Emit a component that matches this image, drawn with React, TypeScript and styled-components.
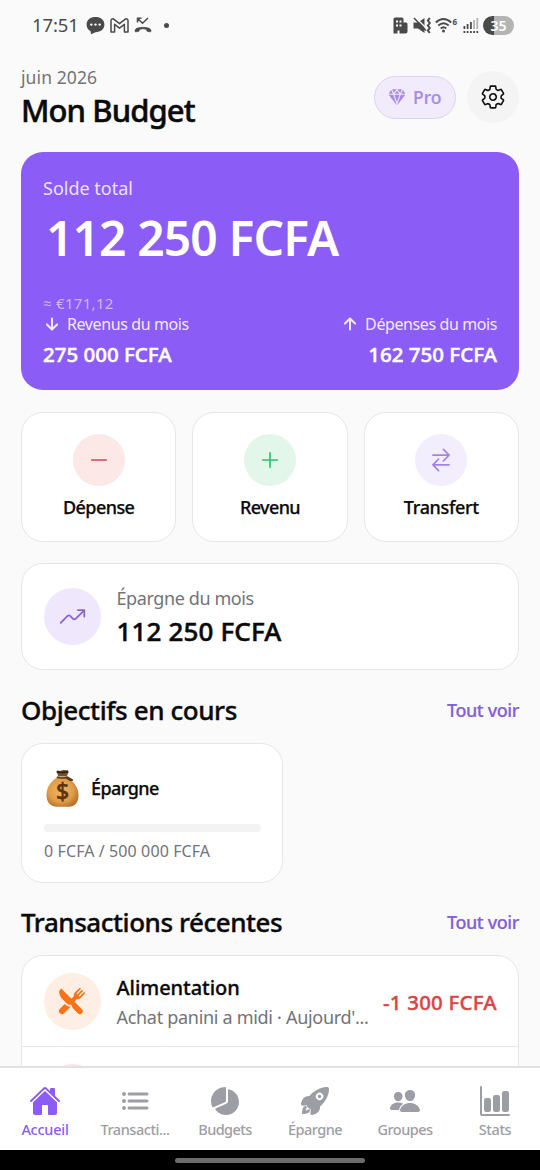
import React from 'react';
import styled, { createGlobalStyle } from 'styled-components';
import {
  IoAdd, IoArrowDown, IoArrowUp, IoBarChart, IoDiamond, IoHome, IoList, IoPeople,
  IoPieChart, IoRemove, IoRestaurant, IoRocket, IoSettingsOutline, IoSwapHorizontal, IoTrendingUp,
} from 'react-icons/io5';

const GlobalStyle = createGlobalStyle`
  * { box-sizing: border-box; }
  body { margin: 0; background: #fafafa; }
  svg { display: block; flex: none; }
`;

const Screen = styled.div`
  width: 540px;
  height: 1170px;
  display: flex;
  flex-direction: column;
  overflow: hidden;
  background: #fafafa;
  color: #0a0a0a;
  font-family: 'Noto Sans', 'Open Sans', sans-serif;
`;

const Text = styled.span<{ $size: number; $line: number; $weight?: number; $color?: string; $track?: number; $heavy?: number }>`
  display: block;
  white-space: nowrap;
  font-size: ${(p) => p.$size}px;
  line-height: ${(p) => p.$line}px;
  font-weight: ${(p) => p.$weight ?? 400};
  letter-spacing: ${(p) => p.$track ?? 0}px;
  color: ${(p) => p.$color ?? 'inherit'};
  -webkit-text-stroke: ${(p) => p.$heavy ?? 0}px currentColor;
`;

const StatusBar = styled.div`
  height: 50px;
  flex: none;
  display: flex;
  align-items: center;
  justify-content: space-between;
  padding: 0 26px 0 32px;
  color: #4a4a4a;
`;
const StatusLeft = styled.div`
  display: flex;
  align-items: center;
  gap: 5px;
`;
const Clock = styled.div`
  margin-right: 2px;
`;
const StatusRight = styled.div`
  display: flex;
  align-items: center;
  gap: 4.5px;
`;
const Dot = styled.i`
  width: 5px;
  height: 5px;
  margin-left: 7px;
  border-radius: 50%;
  background: #4a4a4a;
`;
const Battery = styled.div`
  width: 31px;
  height: 19px;
  border-radius: 10px;
  background: linear-gradient(90deg, #4a4a4a 35%, #b4b4b4 35%);
  display: flex;
  justify-content: center;
`;

const Content = styled.main`
  flex: 1;
  min-height: 0;
  overflow: hidden;
  padding: 0 21px;
`;

const Header = styled.header`
  height: 102px;
  display: flex;
  justify-content: space-between;
`;
const Titles = styled.div`
  padding-top: 15px;
`;
const HeaderActions = styled.div`
  display: flex;
  align-items: center;
  gap: 11px;
  height: 52px;
  margin-top: 21px;
`;
const ProPill = styled.div`
  display: flex;
  align-items: center;
  gap: 7px;
  width: 82px;
  height: 43px;
  padding-left: 13px;
  border: 1px solid #dcd3f3;
  border-radius: 22px;
  background: #f1ebfc;
  color: #a78ce6;
`;

const Circle = styled.div<{ $size: number; $bg: string; $color: string }>`
  width: ${(p) => p.$size}px;
  height: ${(p) => p.$size}px;
  flex: none;
  border-radius: 50%;
  display: flex;
  align-items: center;
  justify-content: center;
  background: ${(p) => p.$bg};
  color: ${(p) => p.$color};
`;

const BalanceCard = styled.section`
  height: 238px;
  border-radius: 22px;
  background: #8b5cf6;
  color: #fff;
  padding: 24px 22px 0;
`;
const Amount = styled.div`
  padding: 8px 0 24px 3px;
`;
const Split = styled.div`
  display: flex;
  justify-content: space-between;
`;
const Flow = styled.div<{ $end?: boolean }>`
  display: flex;
  flex-direction: column;
  align-items: ${(p) => (p.$end ? 'flex-end' : 'flex-start')};
  gap: 6px;
`;
const FlowLabel = styled.div`
  display: flex;
  align-items: center;
  gap: 6px;
  color: #f1e9fe;

  svg path { stroke-width: 58px; }
`;

const Card = styled.section`
  background: #fff;
  border: 1px solid #e6e6e8;
  border-radius: 22px;
`;
const Actions = styled.div`
  display: grid;
  grid-template-columns: repeat(3, 1fr);
  gap: 16px;
  margin: 22px 0 21px;
`;
const ActionCard = styled(Card)`
  height: 129.5px;
  display: flex;
  flex-direction: column;
  align-items: center;
  gap: 8px;
  padding-top: 21px;
`;
const SavingsCard = styled(Card)`
  height: 107.5px;
  display: flex;
  align-items: center;
  gap: 16px;
  padding: 0 21.5px;
`;
const SavingsText = styled.div`
  padding-top: 2px;
`;
const SectionHead = styled.div<{ $height: number }>`
  height: ${(p) => p.$height}px;
  padding-top: 6px;
  display: flex;
  align-items: center;
  justify-content: space-between;
`;
const GoalCard = styled(Card)`
  width: 262px;
  height: 140px;
  padding: 25px 21px 0 22px;
`;
const GoalHead = styled.div`
  display: flex;
  align-items: center;
  gap: 10px;
  height: 40px;
  padding-bottom: 2px;
`;
const Track = styled.div`
  height: 8px;
  margin: 15px 0 8px;
  border-radius: 4px;
  background: #f3f3f4;
`;
const ListCard = styled(Card)`
  overflow: hidden;
`;
const Row = styled.div`
  height: 91px;
  display: flex;
  align-items: center;
  gap: 16px;
  padding: 0 21px 0 21.5px;
  border-bottom: 1px solid #e6e6e8;
`;
const RowText = styled.div`
  flex: 1;
  min-width: 0;
  padding-top: 2px;
`;
const RowAmount = styled.div`
  padding-top: 2px;
`;

const TabBar = styled.nav`
  height: 84px;
  flex: none;
  display: grid;
  grid-template-columns: repeat(6, 90px);
  border-top: 2px solid #e2e2e4;
  background: #fff;
`;
const Tab = styled.div<{ $active?: boolean }>`
  display: flex;
  flex-direction: column;
  align-items: center;
  gap: 1px;
  padding-top: 17px;
  color: ${(p) => (p.$active ? '#8b5cf6' : '#9d9da5')};
`;
const SystemBar = styled.div`
  height: 20px;
  flex: none;
  display: flex;
  align-items: center;
  justify-content: center;
  background: #000;
`;
const Handle = styled.div`
  width: 190px;
  height: 5px;
  border-radius: 3px;
  background: #6b6b6b;
`;

const ChatIcon = () => (
  <svg width="19" height="19" viewBox="0 0 19 19">
    <path d="M9.5 1C14.5 1 18.4 3.6 18.4 8.6S14.5 16.2 9.5 16.2L5 18.3 4.6 15.2C2 13.9 .6 11.6 .6 8.6 .6 3.6 4.5 1 9.5 1Z" fill="currentColor" />
    <g fill="#fafafa"><circle cx="5.3" cy="8.6" r="1.2" /><circle cx="9.5" cy="8.6" r="1.2" /><circle cx="13.7" cy="8.6" r="1.2" /></g>
  </svg>
);
const MailIcon = () => (
  <svg width="19" height="15" viewBox="0 0 19 15" fill="none" stroke="currentColor" strokeWidth="1.5" strokeLinejoin="round">
    <path d="M1 14V2.6C1 .9 2.8 .3 4 1.3L9.5 5.7 15 1.3C16.2 .3 18 .9 18 2.6V14H14.4V6.3L9.5 10.2 4.6 6.3V14Z" />
  </svg>
);
const MissedCallIcon = () => (
  <svg width="18" height="17" viewBox="0 0 18 17" fill="none" stroke="currentColor">
    <path d="M3.5 5.5V1.3H7.5M3.7 1.5 8.5 6.3 14 1" strokeWidth="1.5" />
    <path d="M1 13.8C.5 9.2 17.5 9.2 17 13.8L16.5 15 13 14.3 12.3 12.3Q9 11.3 5.7 12.3L5 14.3 1.5 15Z" fill="currentColor" strokeWidth=".6" strokeLinejoin="round" />
  </svg>
);
const BuildingIcon = () => (
  <svg width="15" height="17" viewBox="0 0 15 17">
    <path d="M2 .5H9Q10.5 .5 10.5 2V5.5H13Q14.5 5.5 14.5 7V14.5Q14.5 16.5 12.5 16.5H6.5V13.5H4.5V16.5H.5V2Q.5 .5 2 .5Z" fill="currentColor" />
    <path d="M3 3.5H5V5.5H3ZM6.5 3.5H8.5V5.5H6.5ZM3 7.5H5V9.5H3ZM6.5 7.5H8.5V9.5H6.5Z" fill="#fafafa" />
  </svg>
);
const MuteIcon = () => (
  <svg width="18" height="17" viewBox="0 0 18 17" fill="none" stroke="currentColor">
    <path d="M.5 5.5H5L11.5 1V16L5 11.5H.5Z" fill="currentColor" stroke="none" />
    <path d="M2.5 .5 13.5 11.5" stroke="#fafafa" strokeWidth="1.4" />
    <path d="M1 1 13 13.5" strokeWidth="1.5" />
    <path d="M16.8 1 14.9 3.5 16.8 6 14.9 8.5 16.8 11 14.9 13.5 16.8 16" strokeWidth="2" />
  </svg>
);
const WifiIcon = () => (
  <svg width="23" height="17" viewBox="0 0 23 17" fill="none" stroke="currentColor" strokeWidth="1.8">
    <path d="M.8 5.5Q8.5-1.5 16.2 5.5M3.3 8.5Q8.5 4 13.7 8.5M5.7 11.5Q8.5 9 11.3 11.5" />
    <circle cx="8.5" cy="14" r="1.5" fill="currentColor" stroke="none" />
    <text x="17.5" y="7.5" fontFamily="Noto Sans, sans-serif" fontSize="8" fontWeight="700" fill="currentColor" stroke="none">6</text>
  </svg>
);
const SignalIcon = () => (
  <svg width="16" height="17" viewBox="0 0 16 17" fill="currentColor">
    <path d="M.5 9H2.3V12H.5ZM3.7 7H5.5V12H3.7ZM7 5H8.8V12H7Z" />
    <path d="M10.2 3H12V12H10.2ZM13.4 1H15.2V12H13.4Z" opacity=".4" />
    <path d="M.5 14H2.3V16H.5ZM3.7 14H5.5V16H3.7ZM7 14H8.8V16H7ZM10.2 14H12V16H10.2ZM13.4 14H15.2V16H13.4Z" />
  </svg>
);
const MoneyBag = () => (
  <svg width="37" height="41" viewBox="0 0 37 41">
    <defs>
      <radialGradient id="bag" cx=".45" cy=".45" r=".6">
        <stop offset="0" stopColor="#f2b862" />
        <stop offset=".65" stopColor="#e09c47" />
        <stop offset="1" stopColor="#b9702a" />
      </radialGradient>
    </defs>
    <path d="M13.5 9.5C6 13.5 2.5 20 2.5 27 2.5 35 7 38.7 13 38.7H24.5C31 38.7 34.5 34.5 34.5 27 34.5 20 30 13.5 23.5 9.5Z" fill="url(#bag)" />
    <path d="M14.3 8.5 12.5 3.5Q13 2 16 3 20 1.3 24 2.8L24.5 4 22.8 8.5Z" fill="#7a5226" />
    <path d="M12.8 3.6Q19 5.6 24.2 3.5" stroke="#33231a" strokeWidth="2" fill="none" />
    <path d="M13 8.3Q18 10 23.5 8.3L29.5 11.8Q29 13.5 25.5 12.8L22 10.4Q17 11.2 12.6 10Z" fill="#5c3a1a" />
    <text x="18.5" y="32" textAnchor="middle" fontFamily="Noto Sans, sans-serif" fontSize="23" fontWeight="500" fill="#5a3313" stroke="#5a3313" strokeWidth=".5">$</text>
  </svg>
);

const tabs = [
  { label: 'Accueil', icon: IoHome, track: -0.25 },
  { label: 'Transacti...', icon: IoList, track: -0.45 },
  { label: 'Budgets', icon: IoPieChart, track: -0.6 },
  { label: 'Épargne', icon: IoRocket, track: -0.55 },
  { label: 'Groupes', icon: IoPeople, track: -0.55 },
  { label: 'Stats', icon: IoBarChart, track: -0.4 },
];

const actions = [
  { label: 'Dépense', icon: IoRemove, bg: '#fde8e8', color: '#d9434f', track: -0.55 },
  { label: 'Revenu', icon: IoAdd, bg: '#e2f7ea', color: '#2fbf6b', track: -0.65 },
  { label: 'Transfert', icon: IoSwapHorizontal, bg: '#f3eefe', color: '#a583e6', track: -0.35 },
];

export default function App() {
  return (
    <Screen>
      <GlobalStyle />
      <StatusBar>
        <StatusLeft>
          <Clock><Text $size={18.5} $line={26} $track={-0.1}>17:51</Text></Clock>
          <ChatIcon />
          <MailIcon />
          <MissedCallIcon />
          <Dot />
        </StatusLeft>
        <StatusRight>
          <BuildingIcon />
          <MuteIcon />
          <WifiIcon />
          <SignalIcon />
          <Battery><Text $size={14} $line={19} $weight={600} $color="#fff">35</Text></Battery>
        </StatusRight>
      </StatusBar>
      <Content>
        <Header>
          <Titles>
            <Text $size={17.5} $line={24} $color="#737378" $track={0.1}>juin 2026</Text>
            <Text $size={31} $line={42} $weight={500} $track={-0.9} $heavy={0.5}>Mon Budget</Text>
          </Titles>
          <HeaderActions>
            <ProPill>
              <IoDiamond size={18} />
              <Text $size={17.5} $line={24} $weight={500} $heavy={0.2}>Pro</Text>
            </ProPill>
            <Circle $size={52} $bg="#f4f4f5" $color="#111"><IoSettingsOutline size={26} /></Circle>
          </HeaderActions>
        </Header>
        <BalanceCard>
          <Text $size={18} $line={24} $color="#ebe1fd">Solde total</Text>
          <Amount><Text $size={48} $line={60} $weight={600} $track={-0.9}>112 250 FCFA</Text></Amount>
          <Text $size={15} $line={22} $color="#cdb8fb" $track={0.3}>≈ €171,12</Text>
          <Split>
            <Flow>
              <FlowLabel><IoArrowDown size={18} /><Text $size={16} $line={20} $track={-0.4}>Revenus du mois</Text></FlowLabel>
              <Text $size={20.5} $line={28} $weight={500} $heavy={0.5}>275 000 FCFA</Text>
            </Flow>
            <Flow $end>
              <FlowLabel><IoArrowUp size={18} /><Text $size={16} $line={20} $track={-0.4}>Dépenses du mois</Text></FlowLabel>
              <Text $size={20.5} $line={28} $weight={500} $heavy={0.5}>162 750 FCFA</Text>
            </Flow>
          </Split>
        </BalanceCard>
        <Actions>
          {actions.map(({ label, icon: Icon, bg, color, track }) => (
            <ActionCard key={label}>
              <Circle $size={52} $bg={bg} $color={color}><Icon size={26} /></Circle>
              <Text $size={18} $line={26} $weight={500} $track={track} $heavy={0.25}>{label}</Text>
            </ActionCard>
          ))}
        </Actions>
        <SavingsCard>
          <Circle $size={57} $bg="#efe8fd" $color="#8a63d8"><IoTrendingUp size={29} /></Circle>
          <SavingsText>
            <Text $size={18} $line={28} $color="#737378" $track={-0.4}>Épargne du mois</Text>
            <Text $size={26} $line={38} $weight={500} $track={0.15} $heavy={0.5}>112 250 FCFA</Text>
          </SavingsText>
        </SavingsCard>
        <SectionHead $height={73}>
          <Text $size={26} $line={36} $weight={500} $track={-0.42} $heavy={0.35}>Objectifs en cours</Text>
          <Text $size={18} $line={26} $weight={500} $color="#8460d6" $track={-0.4} $heavy={0.2}>Tout voir</Text>
        </SectionHead>
        <GoalCard>
          <GoalHead>
            <MoneyBag />
            <Text $size={18} $line={26} $weight={500} $track={-0.55} $heavy={0.25}>Épargne</Text>
          </GoalHead>
          <Track />
          <Text $size={16} $line={22} $color="#737378" $track={0.1}>0 FCFA / 500 000 FCFA</Text>
        </GoalCard>
        <SectionHead $height={72}>
          <Text $size={26} $line={36} $weight={500} $track={-0.45} $heavy={0.35}>Transactions récentes</Text>
          <Text $size={18} $line={26} $weight={500} $color="#8460d6" $track={-0.4} $heavy={0.2}>Tout voir</Text>
        </SectionHead>
        <ListCard>
          <Row>
            <Circle $size={57} $bg="#feeee3" $color="#f97316"><IoRestaurant size={28} /></Circle>
            <RowText>
              <Text $size={20} $line={30} $weight={500} $track={-0.05} $heavy={0.3}>Alimentation</Text>
              <Text $size={18} $line={28} $color="#737378" $track={-0.3}>Achat panini a midi · Aujourd'...</Text>
            </RowText>
            <RowAmount>
              <Text $size={20.5} $line={28} $weight={500} $color="#dc4444" $track={0.2} $heavy={0.35}>-1 300 FCFA</Text>
            </RowAmount>
          </Row>
          <Row>
            <Circle $size={57} $bg="#fce4ec" $color="#ec4899" />
          </Row>
        </ListCard>
      </Content>
      <TabBar>
        {tabs.map(({ label, icon: Icon, track }, i) => (
          <Tab key={label} $active={i === 0}>
            <Icon size={32} />
            <Text $size={14.5} $line={22} $weight={500} $track={track}>{label}</Text>
          </Tab>
        ))}
      </TabBar>
      <SystemBar><Handle /></SystemBar>
    </Screen>
  );
}
